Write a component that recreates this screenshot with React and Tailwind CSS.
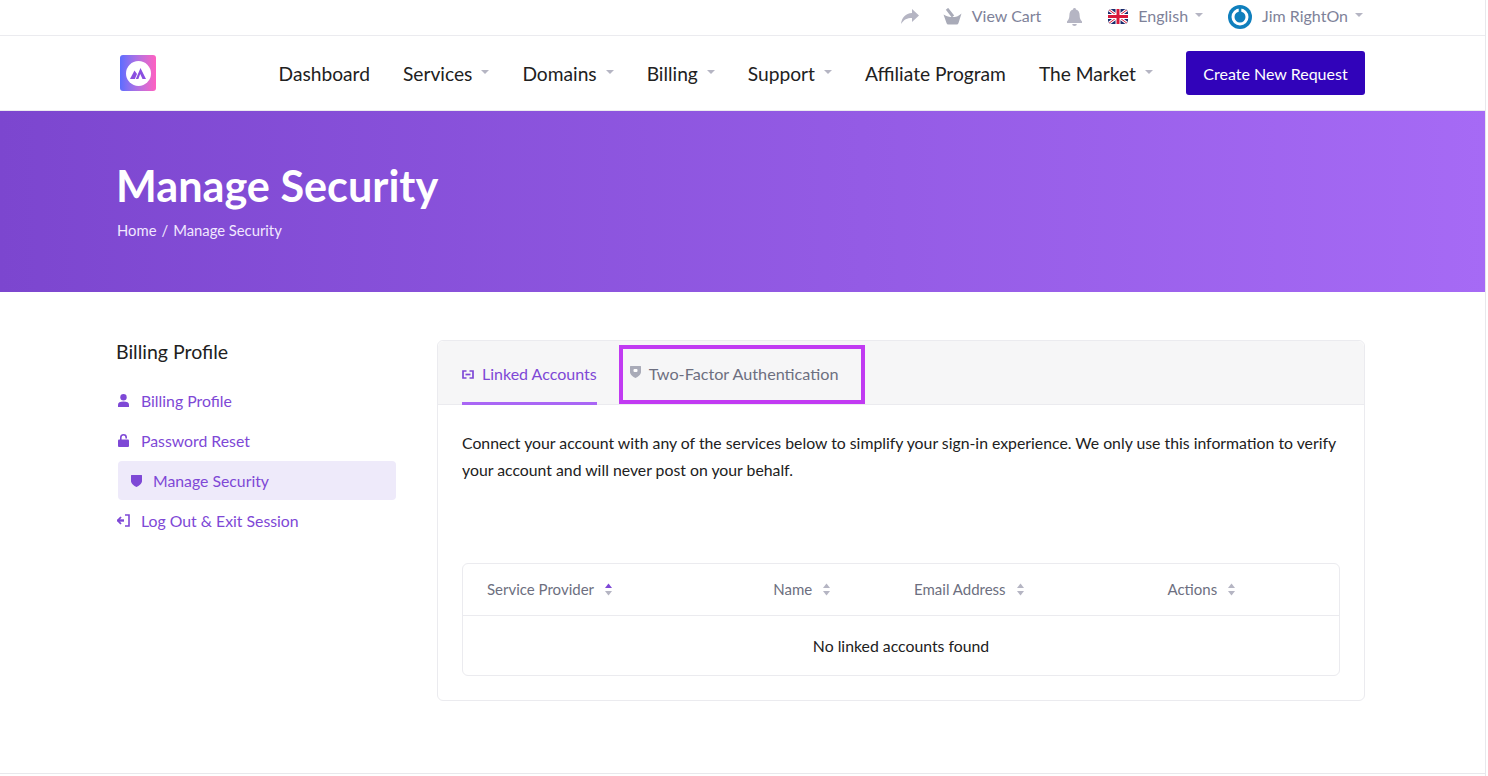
const navItems = [
  { label: 'Dashboard' },
  { label: 'Services', caret: true },
  { label: 'Domains', caret: true },
  { label: 'Billing', caret: true },
  { label: 'Support', caret: true },
  { label: 'Affiliate Program' },
  { label: 'The Market', caret: true },
];

const columns = [
  { title: 'Service Provider', width: 'w-[287px]', active: true },
  { title: 'Name', width: 'w-[141px]' },
  { title: 'Email Address', width: 'w-[254px]' },
  { title: 'Actions', width: 'w-[196px]' },
];

function Caret({ className = 'ml-[9px]' }) {
  return <span className={`${className} mb-[3px] inline-block h-0 w-0 border-x-[4px] border-t-[4px] border-x-transparent border-t-[#b5b5c3]`} />;
}

function Logo() {
  return (
    <div className="flex h-[36px] w-[36px] items-center justify-center rounded-[3px] bg-gradient-to-r from-[#5b6cff] to-[#ff5fc0]">
      <div className="flex h-[25px] w-[25px] items-center justify-center rounded-full bg-white">
        <svg width="16" height="11" viewBox="0 0 16 11" fill="#8a4fe0">
          <path d="M0 11 L4.5 2.5 L7 6 L4.8 11 Z" />
          <path d="M5.8 11 L10.5 0 L16 11 H12.5 L10.2 6 L8.4 11 Z" />
        </svg>
      </div>
    </div>
  );
}

function UkFlag() {
  return (
    <svg width="20" height="15" viewBox="0 0 20 15" className="rounded-[4px]">
      <rect width="20" height="15" fill="#1a2a6c" />
      <path d="M0 0 L20 15 M20 0 L0 15" stroke="#fff" strokeWidth="3" />
      <path d="M0 0 L20 15 M20 0 L0 15" stroke="#d8183a" strokeWidth="1" />
      <path d="M10 0 V15 M0 7.5 H20" stroke="#fff" strokeWidth="5" />
      <path d="M10 0 V15 M0 7.5 H20" stroke="#d8183a" strokeWidth="3" />
    </svg>
  );
}

function Avatar() {
  return (
    <svg width="24" height="24" viewBox="0 0 24 24" fill="none">
      <circle cx="12" cy="12" r="12" fill="#0f7fbd" />
      <circle cx="12" cy="12" r="7" stroke="#fff" strokeWidth="3" />
      <path d="M12 3 V11.5" stroke="#0f7fbd" strokeWidth="2.6" />
    </svg>
  );
}

function BasketIcon() {
  return (
    <svg width="19" height="17" viewBox="0 0 19 17" fill="#a9abb8">
      <path d="M0.5 6.5 C4 8.5 6 9 9.5 9 S15 8.5 18.5 5.5 L15.5 15 a2 2 0 0 1 -2 1.5 H5.5 a2 2 0 0 1 -2 -1.5 Z" />
      <path d="M4 0.8 L10 8.5" stroke="#a9abb8" strokeWidth="3" />
    </svg>
  );
}

function BellIcon() {
  return (
    <svg width="15" height="18" viewBox="0 0 15 18" fill="#b5b5c3">
      <path d="M7.5 0 a1.4 1.4 0 0 1 1.4 1.5 C11.5 2.2 12.6 4.4 12.6 7 c0 3.6 1 5 2.4 6.4 V15 H0 v-1.6 C1.4 12 2.4 10.6 2.4 7 c0-2.6 1.1-4.8 3.7-5.5 A1.4 1.4 0 0 1 7.5 0 Z" />
      <path d="M5.2 16 h4.6 a2.3 2 0 0 1 -4.6 0 Z" />
    </svg>
  );
}

function ShareIcon() {
  return (
    <svg width="18" height="15" viewBox="0 0 18 15" fill="#b5b5c3">
      <path d="M11 0 L18 6.5 L11 13 V9 C6 9 3 10.5 0 15 C0.8 8.5 4.5 4.5 11 4 Z" />
    </svg>
  );
}

function UserIcon() {
  return (
    <svg width="11" height="13" viewBox="0 0 11 13" fill="#7e48d6">
      <circle cx="5.5" cy="3.3" r="3.2" />
      <path d="M0 13 V10.8 C0 8.8 2 7.6 5.5 7.6 S11 8.8 11 10.8 V13 Z" />
    </svg>
  );
}

function LockIcon() {
  return (
    <svg width="11" height="13" viewBox="0 0 11 13" fill="none">
      <path d="M2.8 6 V3.5 a2.7 2.7 0 0 1 5.4 0 V4.5" stroke="#7e48d6" strokeWidth="1.6" />
      <rect y="5.5" width="11" height="7.5" rx="1" fill="#7e48d6" />
    </svg>
  );
}

function ShieldIcon({ color = '#7e48d6', size = 11 }) {
  return (
    <svg width={size} height={size + 1} viewBox="0 0 11 12" fill={color}>
      <path d="M0.5 0 H10.5 a0.5 0.5 0 0 1 0.5 0.5 V6 C11 8.5 8 11 5.5 12 C3 11 0 8.5 0 6 V0.5 A0.5 0.5 0 0 1 0.5 0 Z" />
      {color !== '#7e48d6' && <rect x="3.5" y="3" width="4" height="3" rx="1" fill="#fff" />}
    </svg>
  );
}

function LogoutIcon() {
  return (
    <svg width="13" height="13" viewBox="0 0 13 13" fill="none" stroke="#7e48d6">
      <path d="M8 1 H12 V12 H8" strokeWidth="1.6" />
      <path d="M0.5 6.5 H7" strokeWidth="2.4" />
      <path d="M4 3 L0.8 6.5 L4 10" strokeWidth="1.8" />
    </svg>
  );
}

function LinkIcon() {
  return (
    <svg width="12" height="9" viewBox="0 0 12 9" fill="none" stroke="#7e48d6" strokeWidth="1.7">
      <path d="M4.5 1 H1 V8 H4.5" />
      <path d="M7.5 1 H11 V8 H7.5" />
      <path d="M3.5 4.5 H8.5" />
    </svg>
  );
}

function SortIcon({ active }) {
  return (
    <svg width="7" height="13" viewBox="0 0 7 13">
      <path d="M3.5 0.5 L7 5 H0 Z" fill={active ? '#7e48d6' : '#b5b5c3'} />
      <path d="M3.5 12.5 L7 8 H0 Z" fill="#b5b5c3" />
    </svg>
  );
}

function SideLink({ icon, label, active }) {
  if (active) {
    return (
      <a className="ml-px flex h-[39px] items-center gap-[11px] rounded-[4px] bg-[#eeeafa] pl-[13px] text-[#7e48d6]">
        <span className="flex w-[11px] justify-center">{icon}</span>
        <span className="pt-px">{label}</span>
      </a>
    );
  }
  return (
    <a className="flex h-[39px] items-center gap-[11px] text-[#7e48d6]">
      <span className="flex w-[13px] justify-center">{icon}</span>
      <span className="pt-px">{label}</span>
    </a>
  );
}

export default function App() {
  return (
    <div className="h-[776px] overflow-hidden bg-white font-['Lato',sans-serif]">
      <div className="h-[776px] w-[1486px] border-r border-[#e8e8ec]">
        {/* top strip */}
        <div className="flex h-[36px] items-center justify-end border-b border-[#ebebef] pb-[2px] pr-[122px] text-[16px] text-[#7e8299]">
          <ShareIcon />
          <span className="ml-[24px]"><BasketIcon /></span>
          <span className="mb-[2px] ml-[10px]">View Cart</span>
          <span className="ml-[26px]"><BellIcon /></span>
          <span className="ml-[26px]"><UkFlag /></span>
          <span className="mb-[2px] ml-[10px]">English</span>
          <Caret className="ml-[7px]" />
          <span className="ml-[25px]"><Avatar /></span>
          <span className="mb-[2px] ml-[10px]">Jim RightOn</span>
          <Caret className="ml-[7px]" />
        </div>

        {/* main nav */}
        <div className="flex h-[75px] items-center justify-between border-b border-[#ebebef] pl-[120px] pr-[120px]">
          <Logo />
          <div className="flex items-center text-[19.2px] text-[#212121]">
            {navItems.map((item) => (
              <a key={item.label} className="mr-[33px] flex items-center pt-[2px]">
                {item.label}
                {item.caret && <Caret />}
              </a>
            ))}
            <button className="h-[44px] w-[179px] rounded-[3px] bg-[#3103ba] pt-px text-[16px] text-white">Create New Request</button>
          </div>
        </div>

        {/* banner */}
        <div className="h-[181px] bg-gradient-to-r from-[#7c46cf] to-[#a66af5] pl-[117px] pt-[46px] text-white">
          <h1 className="-ml-px text-[43.2px] leading-[56px] font-bold">Manage Security</h1>
          <div className="mt-[6px] flex gap-[5px] text-[14.8px] text-[#f1e8ff]">
            <span>Home</span>
            <span>/</span>
            <span>Manage Security</span>
          </div>
        </div>

        {/* content */}
        <div className="flex pl-[117px] pt-[48px]">
          <div className="w-[279px] text-[15.8px]">
            <h2 className="mb-[15px] -ml-px h-[26px] text-[19.5px] leading-[24px] text-[#212121]">Billing Profile</h2>
            <div className="flex flex-col gap-px">
              <SideLink icon={<UserIcon />} label="Billing Profile" />
              <SideLink icon={<LockIcon />} label="Password Reset" />
              <SideLink icon={<ShieldIcon />} label="Manage Security" active />
              <SideLink icon={<LogoutIcon />} label="Log Out & Exit Session" />
            </div>
          </div>

          <div className="ml-[41px] h-[361px] w-[928px] rounded-[6px] border border-[#ebebef]">
            <div className="flex h-[64px] rounded-t-[6px] border-b border-[#ebebef] bg-[#f6f6f7] pl-[24px] text-[16px]">
              <a className="flex h-[64px] items-center gap-[8px] border-b-[3px] border-[#a966f5] pt-[5px] text-[#7e48d6]">
                <LinkIcon />
                Linked Accounts
              </a>
              <a className="relative ml-[32px] flex h-[64px] items-center pl-[1px] pt-[2px] text-[#6d6f80]">
                <span className="mb-[5px]"><ShieldIcon color="#a9abb8" /></span>
                <span className="ml-[8px] text-[16.2px]">Two-Factor Authentication</span>
                <span className="absolute left-[-10px] top-[4px] h-[59px] w-[246px] border-[4px] border-[#c13af2]" />
              </a>
            </div>

            <div className="px-[24px]">
              <p className="mt-[24px] text-[15.8px] leading-[27px] text-[#212121]">
                Connect your account with any of the services below to simplify your sign-in experience. We only use this information to verify your account and will never post on your behalf.
              </p>
              <div className="mt-[80px] h-[113px] rounded-[6px] border border-[#ebebef]">
                <div className="flex h-[52px] items-center border-b border-[#ebebef] text-[15px] text-[#6d6f80]">
                  {columns.map((col) => (
                    <div key={col.title} className={`flex items-center gap-[11px] pl-[24px] ${col.width}`}>
                      {col.title}
                      <SortIcon active={col.active} />
                    </div>
                  ))}
                </div>
                <div className="pt-[20px] text-center text-[15.8px] leading-[20px] text-[#212121]">No linked accounts found</div>
              </div>
            </div>
          </div>
        </div>

        {/* footer rule */}
        <div className="mt-[72px] border-t border-[#e8e8ec]" />
      </div>
    </div>
  );
}
